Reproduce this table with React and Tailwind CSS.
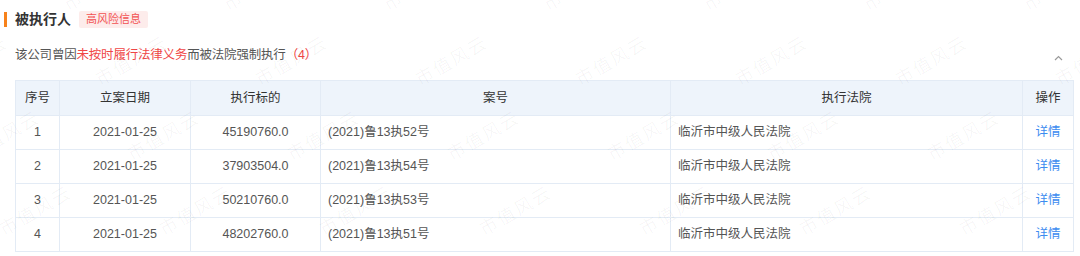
import React from "react";

const rows = [
  ["1", "2021-01-25", "45190760.0", "(2021)鲁13执52号", "临沂市中级人民法院"],
  ["2", "2021-01-25", "37903504.0", "(2021)鲁13执54号", "临沂市中级人民法院"],
  ["3", "2021-01-25", "50210760.0", "(2021)鲁13执53号", "临沂市中级人民法院"],
  ["4", "2021-01-25", "48202760.0", "(2021)鲁13执51号", "临沂市中级人民法院"],
];

function Watermarks() {
  const marks = [];
  for (let r = -1; r < 5; r++) {
    const y = -15 + r * 75;
    const off = ((100 + r * 32) % 160 + 160) % 160;
    for (let c = -1; c < 8; c++) {
      const x = off + c * 160;
      marks.push(
        <span
          key={`${r}-${c}`}
          className="absolute whitespace-nowrap text-[18px] tracking-[2px] font-light text-black/[0.06] -rotate-[30deg]"
          style={{ left: x - 40, top: y - 12 }}
        >
          市值风云
        </span>
      );
    }
  }
  return <div className="pointer-events-none absolute inset-0">{marks}</div>;
}

export default function App() {
  return (
    <div className="relative w-[1080px] h-[256px] overflow-hidden bg-white font-['Liberation_Sans','Noto_Sans_CJK_SC',sans-serif] text-[12.5px] text-[#555]">
      <div className="flex h-[39px] items-center pl-[4px]">
        <div className="h-[15px] w-[3px] bg-[#f7821b]" />
        <div className="ml-[8px] text-[14px] font-bold text-[#333]">被执行人</div>
        <div className="ml-[8px] flex h-[17px] items-center rounded-[2px] bg-[#fdeceb] px-[7px] text-[11px] text-[#f25252]">
          高风险信息
        </div>
      </div>
      <div className="flex h-[32px] items-center justify-between pl-[15px] pr-[17px]">
        <div className="tracking-[-0.2px]">
          该公司曾因<span className="text-[#f04646]">未按时履行法律义务</span>而被法院强制执行<span className="text-[#f04646]">（4）</span>
        </div>
        <svg width="9" height="6" viewBox="0 0 9 6" className="mt-[6px]">
          <polyline points="1,5 4.5,1.5 8,5" fill="none" stroke="#9a9a9a" strokeWidth="1.2" />
        </svg>
      </div>
      <div className="mt-[9px] pl-[15px]">
        <table className="w-[1058px] table-fixed border-collapse border border-[#e3ebf5]">
          <colgroup>
            <col className="w-[44px]" />
            <col className="w-[131px]" />
            <col className="w-[130px]" />
            <col className="w-[350px]" />
            <col className="w-[352px]" />
            <col className="w-[51px]" />
          </colgroup>
          <thead>
            <tr className="h-[35px] bg-[#eef4fb] text-[#333]">
              {["序号", "立案日期", "执行标的", "案号", "执行法院", "操作"].map((h) => (
                <th key={h} className="border border-[#e3ebf5] p-0 text-center font-normal">
                  {h}
                </th>
              ))}
            </tr>
          </thead>
          <tbody>
            {rows.map((r) => (
              <tr key={r[0]} className="h-[34px]">
                <td className="border border-[#e3ebf5] p-0 text-center">{r[0]}</td>
                <td className="border border-[#e3ebf5] p-0 text-center">{r[1]}</td>
                <td className="border border-[#e3ebf5] p-0 text-center">{r[2]}</td>
                <td className="border border-[#e3ebf5] py-0 pl-[7px] text-left">{r[3]}</td>
                <td className="border border-[#e3ebf5] py-0 pl-[7px] text-left">{r[4]}</td>
                <td className="border border-[#e3ebf5] p-0 text-center text-[#3d8cf0]">详情</td>
              </tr>
            ))}
          </tbody>
        </table>
      </div>
      <Watermarks />
    </div>
  );
}
